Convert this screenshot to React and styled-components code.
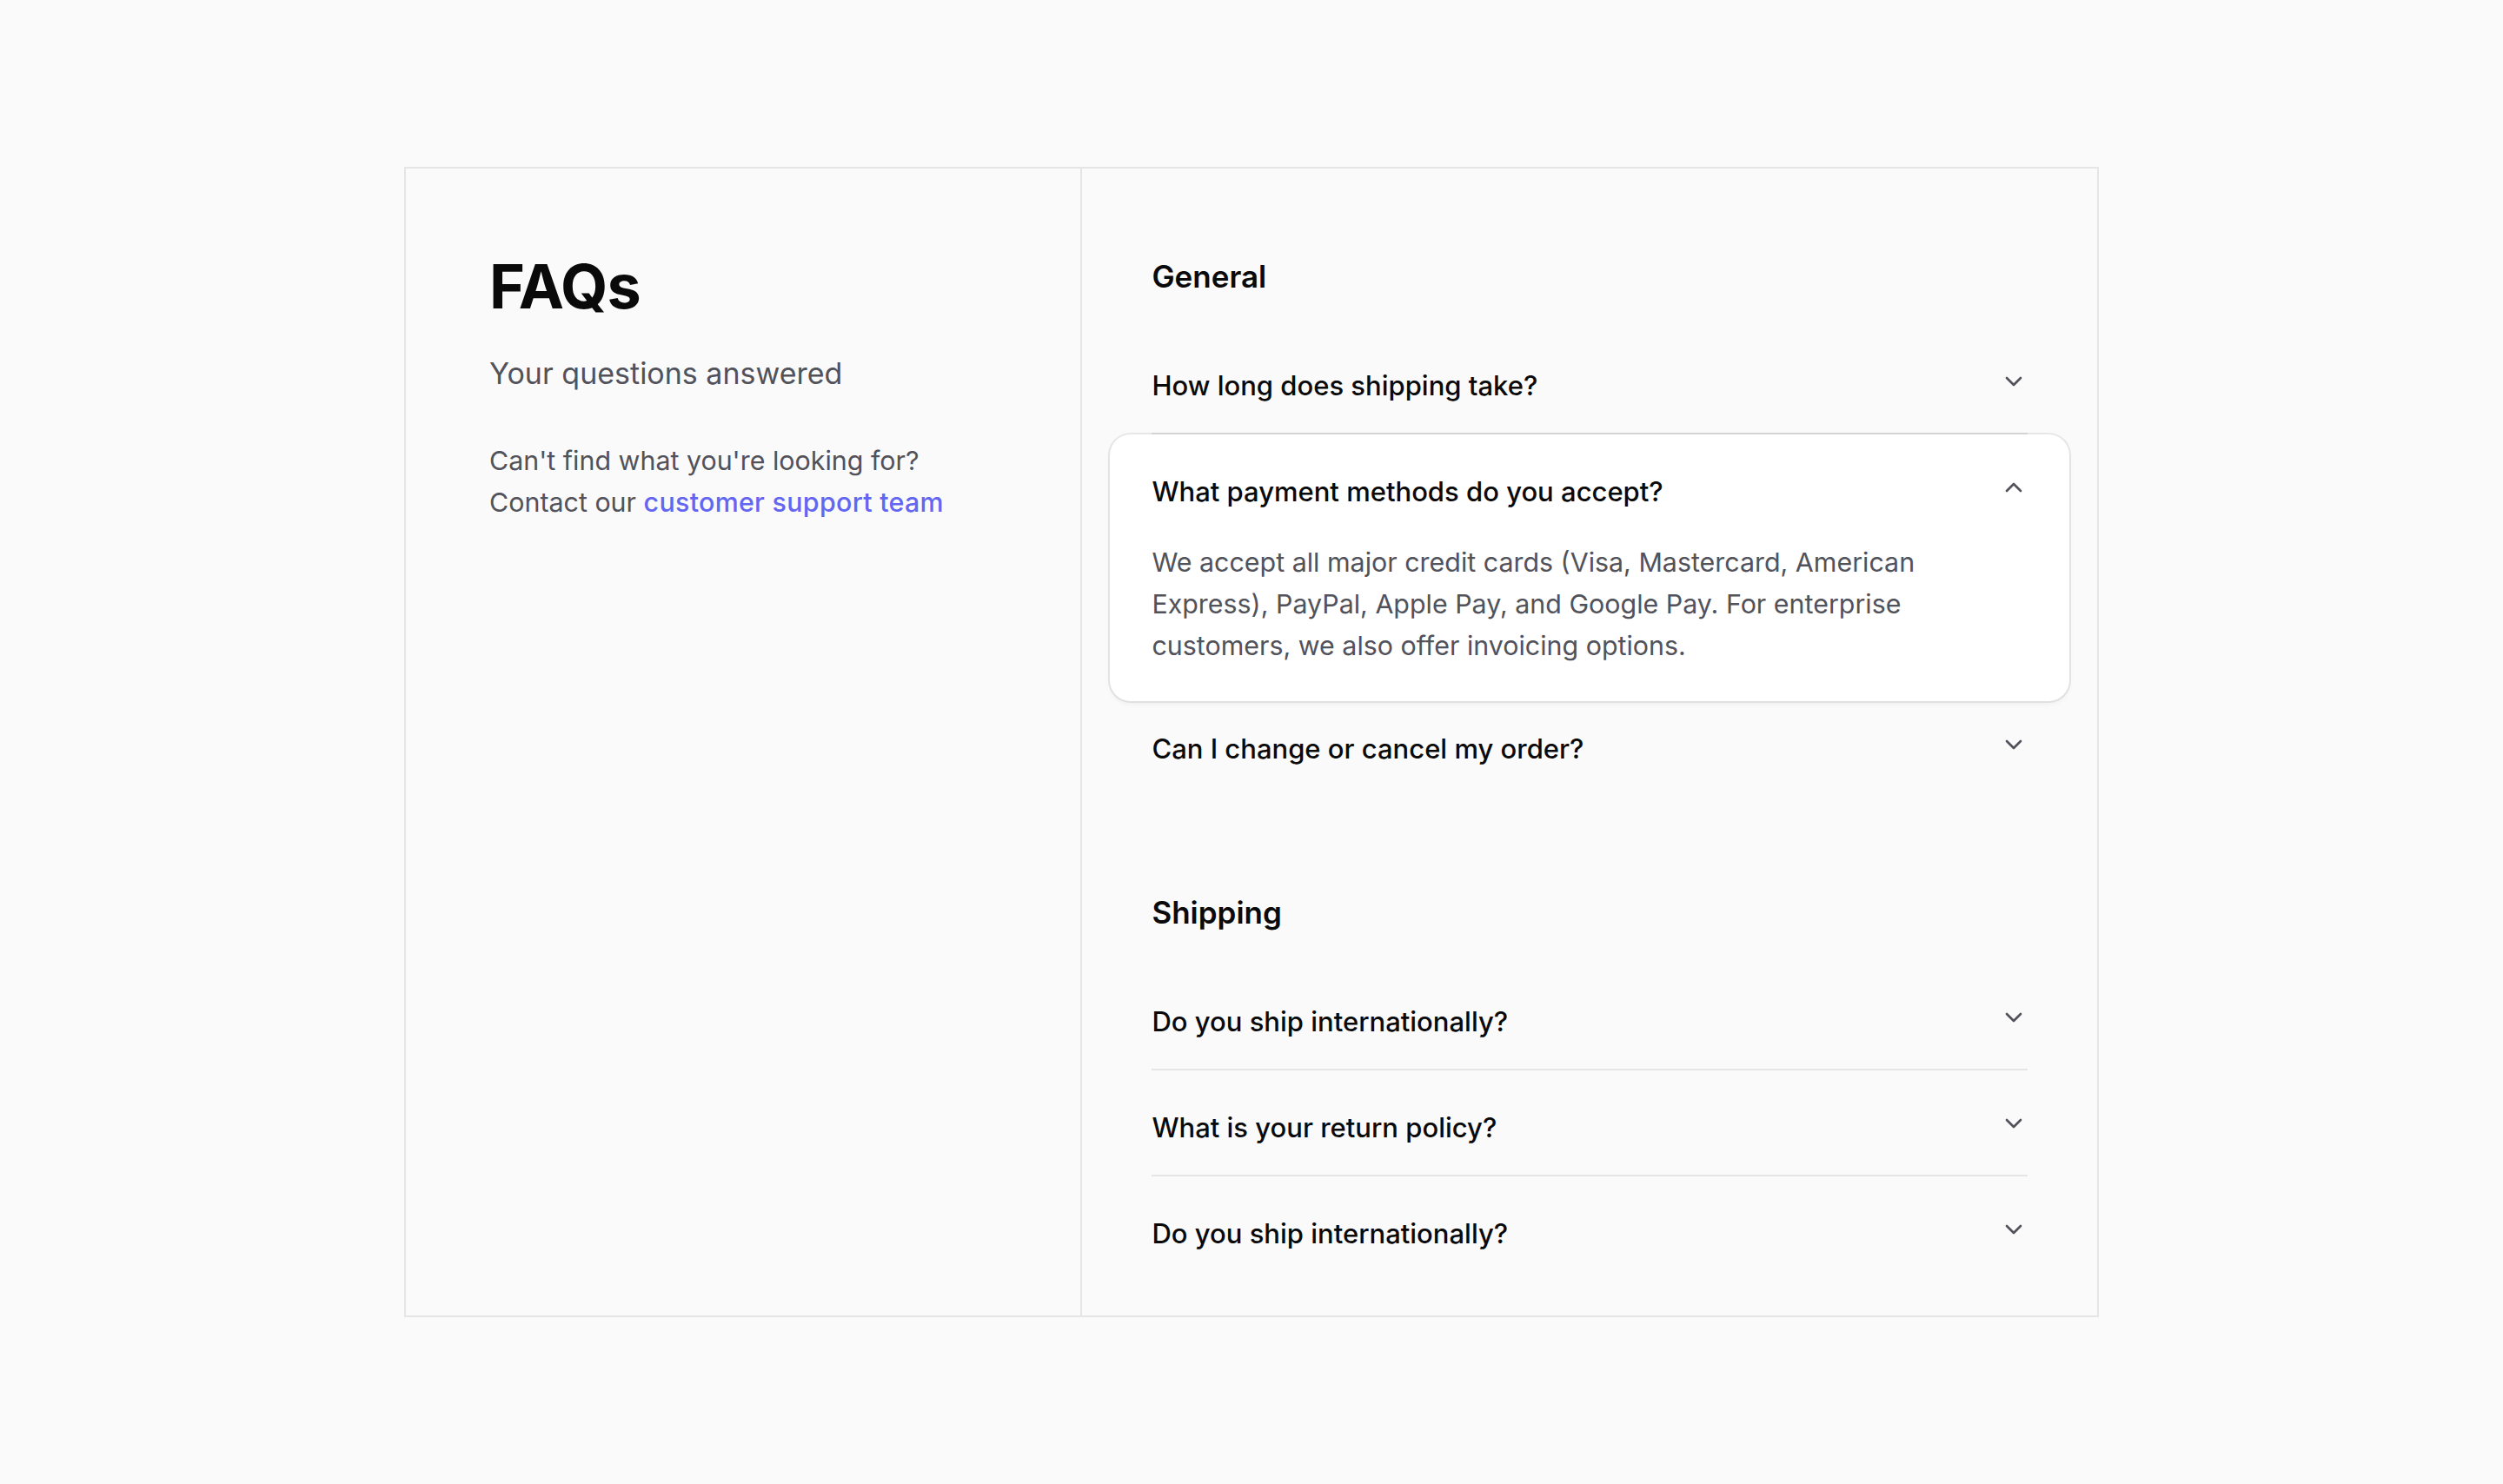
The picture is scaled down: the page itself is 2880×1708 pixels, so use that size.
import React, { useState } from "react";
import styled, { createGlobalStyle } from "styled-components";
import { ChevronDown, ChevronUp } from "lucide-react";

const GlobalStyle = createGlobalStyle`
  *, *::before, *::after { box-sizing: border-box; }
  html, body { margin: 0; padding: 0; }
  body {
    background: #fafafa;
    font-family: "Inter", "Noto Sans", "Liberation Sans", sans-serif;
    color: #0a0a0a;
    -webkit-font-smoothing: antialiased;
  }
`;

const Page = styled.main`
  min-height: 100vh;
  display: flex;
  align-items: center;
  justify-content: center;
`;

const Panel = styled.section`
  width: 1950px;
  display: grid;
  grid-template-columns: 2fr 3fr;
  border: 2px solid #e5e5e5;
  background: #fafafa;
`;

const Intro = styled.div`
  padding: 96px 96px;
  border-right: 2px solid #e5e5e5;
`;

const Title = styled.h1`
  margin: 0;
  font-size: 70px;
  line-height: 80px;
  font-weight: 700;
  letter-spacing: -1px;
  color: #0a0a0a;
`;

const Subtitle = styled.p`
  margin: 32px 0 0;
  font-size: 34px;
  line-height: 56px;
  font-weight: 400;
  color: #52525b;
`;

const Help = styled.p`
  margin: 48px 0 0;
  font-size: 30.4px;
  line-height: 48px;
  color: #52525b;
`;

const Link = styled.a`
  color: #6366f1;
  font-weight: 500;
  letter-spacing: 0.3px;
  text-decoration: none;
`;

const Content = styled.div`
  padding: 96px 80px 40px;
  display: flex;
  flex-direction: column;
  gap: 106px;
`;

const Section = styled.div`
  display: flex;
  flex-direction: column;
`;

const SectionTitle = styled.h2`
  margin: 0 0 32px;
  font-size: 35px;
  line-height: 56px;
  font-weight: 600;
  color: #0a0a0a;
`;

const List = styled.div`
  display: flex;
  flex-direction: column;
`;

const Item = styled.div`
  position: relative;
  border-bottom: ${(p) => (p.$last ? "none" : "2px solid #e5e5e5")};
  ${(p) =>
    p.$open &&
    `
    margin: 0 -48px -11px;
    padding: 0 48px;
    background: #ffffff;
    border-radius: 24px;
    border-bottom: none;
    box-shadow: 0 0 0 2px rgba(0, 0, 0, 0.07), 0 3px 6px rgba(0, 0, 0, 0.05);
    z-index: 1;
  `}
`;

const Trigger = styled.button`
  all: unset;
  box-sizing: border-box;
  width: 100%;
  display: flex;
  align-items: flex-start;
  justify-content: space-between;
  gap: 32px;
  padding: 42px 0 30px;
  cursor: pointer;
  font-family: inherit;
  font-size: 31px;
  line-height: 48px;
  font-weight: 500;
  color: #0a0a0a;
`;

const Icon = styled.span`
  flex: none;
  display: flex;
  margin-top: 3px;
  color: #52525b;
`;

const Answer = styled.p`
  margin: 0;
  padding: 3px 48px 40px 0;
  font-size: 30.4px;
  line-height: 48px;
  color: #52525b;
`;

const sections = [
  {
    title: "General",
    items: [
      { id: "g1", q: "How long does shipping take?", a: "Most orders ship within 2–3 business days." },
      {
        id: "g2",
        q: "What payment methods do you accept?",
        a: "We accept all major credit cards (Visa, Mastercard, American Express), PayPal, Apple Pay, and Google Pay. For enterprise customers, we also offer invoicing options.",
      },
      { id: "g3", q: "Can I change or cancel my order?", a: "Orders can be changed before they ship." },
    ],
  },
  {
    title: "Shipping",
    items: [
      { id: "s1", q: "Do you ship internationally?", a: "Yes, we ship to most countries." },
      { id: "s2", q: "What is your return policy?", a: "Returns are accepted within 30 days." },
      { id: "s3", q: "Do you ship internationally?", a: "Yes, we ship to most countries." },
    ],
  },
];

export default function App() {
  const [open, setOpen] = useState("g2");
  return (
    <>
      <GlobalStyle />
      <Page>
        <Panel>
          <Intro>
            <Title>FAQs</Title>
            <Subtitle>Your questions answered</Subtitle>
            <Help>
              Can't find what you're looking for?
              <br />
              Contact our <Link href="#">customer support team</Link>
            </Help>
          </Intro>
          <Content>
            {sections.map((s) => (
              <Section key={s.title}>
                <SectionTitle>{s.title}</SectionTitle>
                <List>
                  {s.items.map((it, i) => {
                    const isOpen = open === it.id;
                    const last = i === s.items.length - 1;
                    return (
                      <Item key={it.id} $open={isOpen} $last={last}>
                        <Trigger onClick={() => setOpen(isOpen ? null : it.id)}>
                          <span>{it.q}</span>
                          <Icon>
                            {isOpen ? (
                              <ChevronUp size={32} strokeWidth={2} />
                            ) : (
                              <ChevronDown size={32} strokeWidth={2} />
                            )}
                          </Icon>
                        </Trigger>
                        {isOpen && <Answer>{it.a}</Answer>}
                      </Item>
                    );
                  })}
                </List>
              </Section>
            ))}
          </Content>
        </Panel>
      </Page>
    </>
  );
}
